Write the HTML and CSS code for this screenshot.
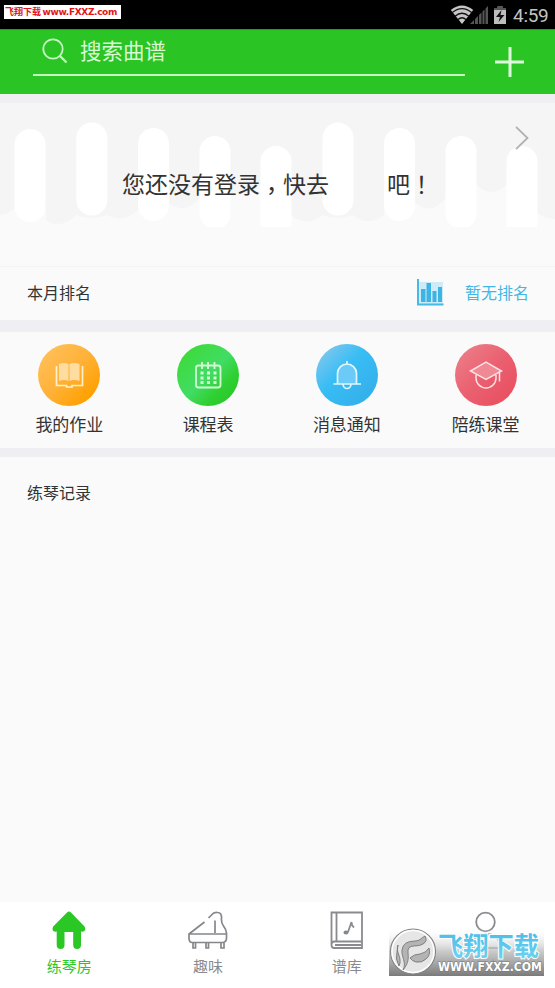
FILE: index.html
```html
<!DOCTYPE html>
<html lang="zh-CN">
<head>
<meta charset="utf-8">
<title>练琴房</title>
<link rel="stylesheet" href="styles.css">
</head>
<body>
<div class="status">
  <div class="source-tag"><span class="tag-cn">飞翔下载</span><span class="tag-url">www.FXXZ.com</span></div>
  <div class="status-right">
    <svg class="status-icons" width="60" height="22" viewBox="0 0 60 22">
      <path d="M12 19L.8 5Q12 -4 23.200 5z" fill="#c6c6c6"/>
      <g fill="none" stroke="#111" stroke-width="1.300">
        <path d="M2 7.800Q12 -.5 22 7.800"/><path d="M5 11.300Q12 5.200 19 11.300"/><path d="M8 14.500Q12 11 16 14.500"/>
      </g>
      <path d="M20 19L24 15V19zM25 14L28 11V19H25zM29 10L31.500 7.500V19H29zM32.500 6.500L34.500 4.500V19H32.500zM35.500 3.500L38 1V19H35.500z" fill="#555"/>
      <path d="M44 3H47.500V1.500H53V3H56V19H44z" fill="#bdbdbd"/><path d="M44 3H47.500V1.500H53V3H56V5H44z" fill="#555"/>
      <path d="M51.500 5L46 12H50L48.500 17L54.500 10H50.500z" fill="#111"/>
    </svg>
    <span class="clock">4:59</span>
  </div>
</div>
<header class="header">
  <div class="search">
    <svg width="26" height="26" viewBox="0 0 26 26" fill="none" stroke="#c4f5c2" stroke-width="1.8"><circle cx="11" cy="11" r="9.700"/><path d="M18 18L24.500 24.500" stroke-width="2.300"/></svg>
    <span>搜索曲谱</span>
  </div>
  <svg class="plus" width="29" height="30" viewBox="0 0 29 30" stroke="#ddfadb" stroke-width="3"><path d="M15 0V30M0 15H29"/></svg>
</header>
<section class="hero">
  <svg class="keys" width="555" height="124" viewBox="0 0 555 124">
    <path class="shade" d="M0 0H555V116Q546 116 537 110V90Q521 90 506 82Q492 96 476 82V94Q461 105 445 96Q429 114 414 98V105Q399 118 384 107V112Q368 125 353 112V112Q337 118 322 112Q307 125 291 112V82Q276 94 260 82Q246 96 230 90V92Q214 105 199 96Q184 112 169 100V107Q153 118 138 107Q123 121 107 112V112Q92 118 76 112Q61 127 46 117V105Q30 118 15 105Q8 112 0 112z"/>
    <g fill="#fff">
      <rect x="14.500" y="26" width="31" height="93" rx="15.500"/><rect x="76.300" y="19.500" width="31" height="93" rx="15.500"/><rect x="138" y="25" width="31" height="93" rx="15.500"/><rect x="199.500" y="33" width="31" height="93" rx="15.500"/><rect x="260.500" y="43" width="31" height="93" rx="15.500"/><rect x="322.500" y="19.500" width="31" height="93" rx="15.500"/><rect x="384" y="25" width="31" height="93" rx="15.500"/><rect x="445.500" y="33" width="31" height="93" rx="15.500"/><rect x="506.500" y="43" width="31" height="93" rx="15.500"/>
    </g>
  </svg>
  <p class="login"><span>您还没有登录<span class="punct comma" lang="zh-TW">，</span>快去</span><span class="bar-end">吧<span class="punct" lang="zh-TW">！</span></span></p>
  <svg class="chevron" width="14" height="24" viewBox="0 0 14 24" fill="none" stroke="#b0b0b0" stroke-width="1.800"><path d="M1 .8L12.500 12L1 23.200"/></svg>
</section>
<section class="rank">
  <span>本月排名</span>
  <div class="rank-right">
    <svg width="27" height="27" viewBox="0 0 27 27"><path d="M2 3H26V25H2z" fill="#d0ebf8"/><path d="M1 0V26M0 25.500H26.500" fill="none" stroke="#47b9e5" stroke-width="2"/><path d="M4 10H8.500V23H4zM9.500 4H14V23H9.500zM15.500 12H19.500V23H15.500zM21 8H25V23H21z" fill="#3eb4e4"/></svg>
    <span>暂无排名</span>
  </div>
</section>
<section class="tools">
  <div class="tool"><svg width="62" height="62" viewBox="0 0 62 62"><defs><linearGradient id="orange" x1=".15" y1=".15" x2=".85" y2=".85"><stop stop-color="#ffbe55"/><stop offset=".5" stop-color="#ffb137"/><stop offset="1" stop-color="#ffa000"/></linearGradient></defs><circle cx="31" cy="31" r="31" fill="url(#orange)"/><path d="M21 20Q26 18 30.500 20V37Q26 35 21 37zM31.500 20Q36 18 41.500 20V37Q36 35 31.500 37z" fill="#ffdc9f"/><path d="M18.500 22V41.500H28.500V43H34V41.500H44.500V22" fill="none" stroke="#fff1ce" stroke-width="1.700"/></svg><span>我的作业</span></div>
  <div class="tool"><svg width="62" height="62" viewBox="0 0 62 62"><defs><linearGradient id="green" x1=".15" y1=".15" x2=".85" y2=".85"><stop stop-color="#3ddb3c"/><stop offset=".5" stop-color="#42dc65"/><stop offset=".8" stop-color="#2fd033"/><stop offset="1" stop-color="#29ca29"/></linearGradient></defs><circle cx="31" cy="31" r="31" fill="url(#green)"/><g fill="none" stroke="#d4fbd4" stroke-width="1.800"><rect x="19" y="21.500" width="24.500" height="22" rx="2.500"/><path d="M25 18V25M31 18V25M37.500 18V25"/><path d="M23.500 29H39.500M23.500 34H39.500M23.500 38.500H39.500" stroke-width="2.800" stroke-dasharray="3 3.500"/></g></svg><span>课程表</span></div>
  <div class="tool"><svg width="62" height="62" viewBox="0 0 62 62"><defs><linearGradient id="blue" x1=".15" y1=".15" x2=".85" y2=".85"><stop stop-color="#74c5ee"/><stop offset=".4" stop-color="#38bdf5"/><stop offset="1" stop-color="#34b0eb"/></linearGradient></defs><circle cx="31" cy="31" r="31" fill="url(#blue)"/><path d="M21.500 39.500V29.500a9.500 9.500 0 0 1 19 0V39.500z" fill="#6bcaf7"/><path d="M17.500 40H45M21.500 40V29.500a9.500 9.500 0 0 1 19 0V40M31 20V17M27 40a4 4.500 0 0 0 8 0" fill="none" stroke="#e1f7ff" stroke-width="1.700"/></svg><span>消息通知</span></div>
  <div class="tool"><svg width="62" height="62" viewBox="0 0 62 62"><defs><linearGradient id="red" x1=".15" y1=".15" x2=".85" y2=".85"><stop stop-color="#ec7884"/><stop offset=".5" stop-color="#ea6070"/><stop offset="1" stop-color="#e95162"/></linearGradient></defs><circle cx="31" cy="31" r="31" fill="url(#red)"/><path d="M15.500 27L31 18L46.500 27L31 35.500z" fill="#ef8994"/><path d="M15.500 27L31 18L46.500 27L31 35.500zM21 31V34a10 10 0 0 0 20 0V31M44.500 28.500V37.500" fill="none" stroke="#ffe0e4" stroke-width="1.500"/></svg><span>陪练课堂</span></div>
</section>
<main class="records"><h2>练琴记录</h2></main>
<nav class="nav">
  <div class="tab active"><svg width="42" height="40" viewBox="0 0 42 40"><path d="M19 1.500Q21 -.5 23 1.500L36.500 15.500Q38 18 36.500 20Q35 21 33 20.500V34a3.800 3.800 0 0 1-7.800 0V21H16.500V34a3.800 3.800 0 0 1-7.800 0V20.500Q7 21 5.200 20Q3.800 18 5.200 15.500z" fill="#2bc725"/></svg><span>练琴房</span></div>
  <div class="tab"><svg width="42" height="40" viewBox="0 0 42 40" fill="none" stroke="#85878b" stroke-width="1.700"><path d="M17.500 11L2 23V28Q2.500 31.500 5 31.500H36Q39.500 31 39.500 27V22Q39.500 19 36.500 15Q34 12 34.500 7Q35 2 30.500 1.500Q27 .8 24.500 4L21.500 7M2 23H39M28 9.500V22M6 32V37H8.500V32M19 32V37H21.500V32M34 32V37H37V32"/></svg><span>趣味</span></div>
  <div class="tab"><svg width="42" height="40" viewBox="0 0 42 40" fill="none" stroke="#898b8f" stroke-width="1.800"><path d="M5.500 1.500H36V37H8Q5.500 37 5.500 34zM10.500 1.500V30.500M5.500 34Q5.500 30.500 8 30.500H36M9 34H35"/><path d="M22 21L25.500 11Q25.500 14.500 28 16.500" stroke-width="1.800"/><ellipse cx="20" cy="21.500" rx="2.500" ry="2.100" fill="#85878b" stroke="none"/></svg><span>谱库</span></div>
  <div class="tab"><svg width="42" height="40" viewBox="0 0 42 40" fill="none" stroke="#898b8f" stroke-width="1.800"><circle cx="20.500" cy="11" r="9.300"/><path d="M7 37Q7 23 21 23T35 37z"/></svg><span>个人</span></div>
</nav>
<div class="watermark">
  <svg width="155" height="49" viewBox="0 0 155 49">
    <defs><linearGradient id="shade" x2="0" y2="1"><stop stop-color="#fff" stop-opacity="0"/><stop offset=".5" stop-color="#c0c0c0" stop-opacity=".85"/><stop offset="1" stop-color="#777" stop-opacity=".98"/></linearGradient><linearGradient id="title" x2="0" y2="1"><stop stop-color="#45b9e6"/><stop offset="1" stop-color="#72d5f0"/></linearGradient></defs>
    <rect width="155" height="49" fill="url(#shade)"/>
    <circle cx="24" cy="24.500" r="22.500" fill="#e6e6e6" stroke="#858585" stroke-width="1.200"/><circle cx="24" cy="24.500" r="21" fill="none" stroke="#fff" stroke-width="1.400"/>
    <path d="M14 43C18 36 12 29 13 23Q14 14 26 14C31 14 32 11 36 9Q39 14 34 17Q31 19 25 19Q18 19 19 26C20 34 18 38 14 43zM9 18C6 25 14 31 10 39Q6 32 8 25zM21 31Q25 27 31 27Q37 26 40 21Q42 28 37 32Q33 36 27 35Q23 34 21 31z" fill="#b4b4b4" stroke="#777" stroke-width=".9"/>
    <text class="wm-title" x="49" y="29" textLength="101" lengthAdjust="spacingAndGlyphs">飞翔下载</text>
    <text class="wm-url" x="49" y="44" textLength="104" lengthAdjust="spacingAndGlyphs">WWW.FXXZ.COM</text>
  </svg>
</div>
</body>
</html>
```
FILE: styles.css
```css
* { box-sizing: border-box; }
body { margin: 0; width: 555px; height: 988px; overflow: hidden; display: flex; flex-direction: column; position: relative; background: #fafafa; color: #333; font-family: "Noto Sans CJK SC", sans-serif; }
svg { display: block; flex: none; }
.status { height: 29px; flex: none; background: #000; display: flex; justify-content: space-between; align-items: flex-start; padding: 5px 7px 0 4px; }
.source-tag { width: 117px; height: 14px; background: #fff; color: #e01515; display: flex; align-items: center; justify-content: space-between; padding: 0 4px 0 1px; font-size: 9px; font-weight: 700; line-height: 14px; white-space: nowrap; }
.tag-url { font-family: "DejaVu Sans", sans-serif; font-size: 9px; letter-spacing: -.35px; }
.status-right { display: flex; gap: 3px; height: 22px; }
.clock { color: #c4c4c4; font: 19px/21px Roboto, sans-serif; width: 35px; letter-spacing: -.3px; }
.header { height: 65px; flex: none; background: #2ac424; border-top: 1px solid #249b20; display: flex; padding: 0 31px 0 33px; justify-content: space-between; }
.search { width: 432px; height: 46px; border-bottom: 2px solid #c5f5c1; display: flex; padding: 8px 0 0 9px; gap: 12px; color: #d8fad5; font-size: 21.5px; line-height: 24px; }
.plus { margin-top: 17px; }
.hero { height: 173px; flex: none; border-top: 9px solid #eeeef3; border-bottom: 1px solid #f3f3f3; position: relative; }
.keys { position: absolute; top: 0; left: 0; }
.shade { fill: #f5f5f5; }
.login { position: relative; margin: 62px 0 0 122px; display: flex; gap: 57px; font-size: 23px; line-height: 36px; white-space: nowrap; }
.bar-end { margin-left: 1px; }
.punct { font-family: "Noto Sans CJK TC", sans-serif; }
.comma { position: relative; top: 6px; }
.chevron { position: absolute; left: 515px; top: 23px; }
.rank { height: 53px; flex: none; display: flex; justify-content: space-between; align-items: center; padding: 0 26px 2px 27px; font-size: 16px; }
.rank span { margin-top: -2px; }
.rank-right { display: flex; align-items: center; gap: 21px; color: #42b6e6; }
.tools { height: 137px; flex: none; border-top: 12px solid #eeeef3; border-bottom: 9px solid #eeeef3; display: grid; grid-template-columns: repeat(4, 1fr); padding-top: 12px; }
.tool { display: flex; flex-direction: column; align-items: center; font-size: 17px; line-height: 25px; gap: 5px; }
.records { flex: 1; padding: 23px 27px; }
.records h2 { margin: 0; font-size: 16px; font-weight: 400; line-height: 25px; }
.nav { height: 86px; flex: none; background: #fff; display: grid; grid-template-columns: repeat(4, 1fr); padding-top: 9px; color: #898b8e; }
.tab { display: flex; flex-direction: column; align-items: center; font-size: 15px; line-height: 24px; gap: 3px; }
.active { color: #2bc725; }
.watermark { position: absolute; left: 389px; top: 927px; }
.wm-title { font: 700 26px "Noto Sans CJK SC", sans-serif; fill: url(#title); stroke: #fff; stroke-width: 2px; paint-order: stroke; }
.wm-url { font: 700 11.5px "DejaVu Sans", sans-serif; fill: #fff; stroke: #777; stroke-width: 1px; paint-order: stroke; }
```
